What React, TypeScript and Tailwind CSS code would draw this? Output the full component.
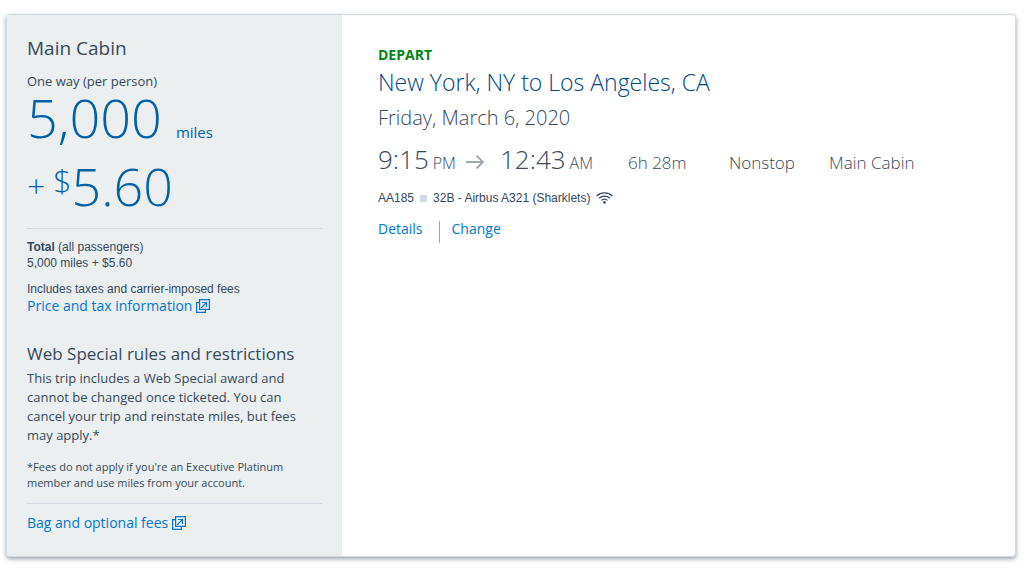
type IconProps = { className?: string };

function NewWindowIcon({ className }: IconProps) {
  return (
    <svg viewBox="0 0 14 14" className={className} fill="none" stroke="currentColor" strokeWidth="1.2" aria-hidden="true">
      <path d="M3.6 0.6h9.8v9.8H3.6z" />
      <path d="M3.6 3.6h-3v9.8h8.8v-3" />
      <path d="M5.2 8.8l5.3-5.3M6 3.5h4.5V8" />
    </svg>
  );
}

function ArrowIcon({ className }: IconProps) {
  return (
    <svg viewBox="0 0 18 14" className={className} fill="none" stroke="currentColor" strokeWidth="1.8" aria-hidden="true">
      <path d="M0 7h17M10.5 0.5L17 7l-6.5 6.5" />
    </svg>
  );
}

function WifiIcon({ className }: IconProps) {
  return (
    <svg viewBox="0 0 17 12" className={className} fill="none" stroke="currentColor" strokeWidth="1.2" aria-hidden="true">
      <path d="M0.6 4C5 -0.2 12 -0.2 16.4 4" />
      <path d="M3 6.2c3-2.8 8-2.8 11 0" />
      <path d="M5.4 8.4c1.8-1.6 4.4-1.6 6.2 0" />
      <circle cx="8.5" cy="10.4" r="1.3" fill="currentColor" stroke="none" />
    </svg>
  );
}

function PriceSummary() {
  return (
    <aside className="w-[335px] shrink-0 bg-[#ebeff0] px-5 pb-6 pt-5 text-[#36495a]">
      <h2 className="text-[19px] leading-[26px]">Main Cabin</h2>
      <p className="mt-3 text-[13px] leading-4">One way (per person)</p>

      <div className="mt-0.5 text-[#0061ab]">
        <p className="flex items-baseline gap-3.5 leading-[52px]">
          <span className="text-[54px] font-light">5,000</span>
          <span className="text-[15px] leading-6">miles</span>
        </p>
        <p className="mt-4 flex items-center leading-[52px]">
          <span className="mr-2 text-[32px] font-light">+</span>
          <span className="self-start text-[32px] font-light leading-10">$</span>
          <span className="text-[52px] font-light">5.60</span>
        </p>
      </div>

      <div className="mt-4 border-t border-[#d0dae0] pt-2.5 font-['Liberation_Sans',sans-serif] text-xs leading-4">
        <p>
          <strong>Total</strong> (all passengers)
        </p>
        <p>5,000 miles + $5.60</p>
        <p className="mt-2.5">Includes taxes and carrier-imposed fees</p>
      </div>
      <a href="#price" className="flex items-center gap-1 text-sm leading-[18px] text-[#0078d2]">
        Price and tax information
        <NewWindowIcon className="size-3.5" />
      </a>

      <h3 className="mt-7 text-[17px] leading-[22px]">Web Special rules and restrictions</h3>
      <p className="mt-1 text-[13px] leading-[19px]">
        This trip includes a Web Special award and
        <br />
        cannot be changed once ticketed. You can
        <br />
        cancel your trip and reinstate miles, but fees
        <br />
        may apply.*
      </p>
      <p className="mt-3.5 text-[11px] leading-4">
        *Fees do not apply if you're an Executive Platinum
        <br />
        member and use miles from your account.
      </p>

      <div className="mt-3 border-t border-[#d0dae0] pt-2.5">
        <a href="#bags" className="flex items-center gap-1 text-sm leading-[18px] text-[#0078d2]">
          Bag and optional fees
          <NewWindowIcon className="size-3.5" />
        </a>
      </div>
    </aside>
  );
}

function FlightDetails() {
  return (
    <section className="min-w-0 flex-1 px-9 pt-8 text-[#36495a]">
      <h3 className="text-sm font-bold leading-4 text-[#008712]">DEPART</h3>
      <h2 className="mt-1 text-[23px] font-light leading-[30px] text-[#00467f]">New York, NY to Los Angeles, CA</h2>
      <p className="mt-1.5 text-[20px] font-light leading-[30px]">Friday, March 6, 2020</p>

      <div className="mt-2 flex items-baseline leading-9">
        <p className="flex w-[250px] items-baseline">
          <span className="flex w-[122px] items-baseline">
            <span className="text-[26px] font-light">9:15</span>
            <span className="ml-1 text-base font-light">PM</span>
            <ArrowIcon className="ml-2.5 h-3.5 w-[18px] text-[#9da6ab]" />
          </span>
          <span className="text-[26px] font-light">12:43</span>
          <span className="ml-1 text-base font-light">AM</span>
        </p>
        <p className="w-[101px] text-[17px] font-light">6h 28m</p>
        <p className="w-[100px] text-[17px] font-light">Nonstop</p>
        <p className="text-[17px] font-light">Main Cabin</p>
      </div>

      <p className="mt-2 flex items-center font-['Liberation_Sans',sans-serif] text-xs leading-[18px]">
        AA185
        <span className="mx-1.5 size-[7px] bg-[#d0dae0]" />
        32B - Airbus A321 (Sharklets)
        <WifiIcon className="ml-1.5 h-3 w-[17px]" />
      </p>

      <div className="mt-3.5 flex text-sm leading-4 text-[#0078d2]">
        <a href="#details" className="mr-4">Details</a>
        <a href="#change" className="border-l border-[#9da6ab] pb-1.5 pl-3">Change</a>
      </div>
    </section>
  );
}

export default function App() {
  return (
    <main className="bg-white pb-3 pl-1.5 pr-2.5 pt-3.5 font-['Open_Sans','Noto_Sans',sans-serif]">
      <article className="flex rounded-sm border border-[#d0dae0] bg-white shadow-[0_2px_4px_rgba(54,73,90,0.5)]">
        <PriceSummary />
        <FlightDetails />
      </article>
    </main>
  );
}
